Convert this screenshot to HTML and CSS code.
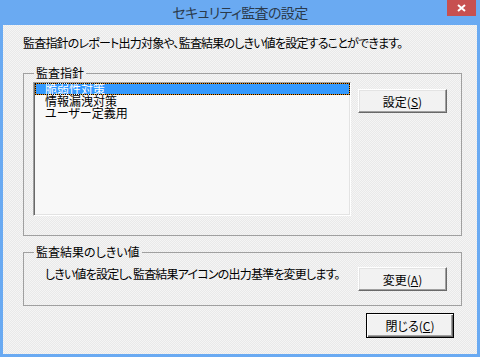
FILE: index.html
```html
<!DOCTYPE html>
<html lang="ja">
<head>
    <meta charset="UTF-8">
    <title>セキュリティ監査の設定</title>
    <link rel="stylesheet" href="styles.css">
</head>
<body>
    <div class="window">
        <div class="titlebar">
            <span class="title">セキュリティ監査の設定</span>
            <span class="close">
                <svg width="9" height="8" viewBox="0 0 9 8"><path d="M1 1 L8 7 M8 1 L1 7" stroke="#fff" stroke-width="2"/></svg>
            </span>
        </div>
        <div class="dialog">
            <p class="intro">監査指針のレポート出力対象や、監査結果のしきい値を設定することができます。</p>

            <fieldset class="group policy">
                <legend>監査指針</legend>
                <div class="policy-body">
                    <ul class="listbox">
                        <li class="selected">脆弱性対策</li>
                        <li>情報漏洩対策</li>
                        <li>ユーザー定義用</li>
                    </ul>
                    <button class="btn">設定(<u>S</u>)</button>
                </div>
            </fieldset>

            <fieldset class="group threshold">
                <legend>監査結果のしきい値</legend>
                <div class="threshold-body">
                    <p class="threshold-text">しきい値を設定し、監査結果アイコンの出力基準を変更します。</p>
                    <button class="btn">変更(<u>A</u>)</button>
                </div>
            </fieldset>

            <div class="footer">
                <button class="btn btn-default">閉じる(<u>C</u>)</button>
            </div>
        </div>
    </div>
</body>
</html>
```

FILE: styles.css
```css
* {
    box-sizing: border-box;
}

body {
    margin: 0;
    font-family: "Noto Sans CJK JP", "Liberation Sans", sans-serif;
    font-size: 12px;
    font-feature-settings: "palt";
    color: #000;
}

.window {
    width: 480px;
    height: 357px;
    background-color: #6aaaf2;
    display: flex;
    flex-direction: column;
}

.titlebar {
    height: 25px;
    display: grid;
    grid-template-columns: 1fr auto 1fr;
    align-items: start;
}

.title {
    grid-column: 2;
    font-size: 14px;
    line-height: 25px;
    letter-spacing: -0.6px;
    color: #2a3a4c;
}

.close {
    grid-column: 3;
    justify-self: end;
    width: 29px;
    height: 16px;
    margin-right: 4px;
    background-color: #c75050;
    display: flex;
    align-items: center;
    justify-content: center;
}

.dialog {
    flex: 1;
    margin: 0 3px 3px;
    padding: 11px 15px 0 20px;
    background-color: #efefef;
    background-image: repeating-conic-gradient(#e9e9e9 0 25%, #f5f5f5 0 50%);
    background-size: 2px 2px;
}

.intro {
    margin: 0 0 16px;
    line-height: 14px;
    letter-spacing: -0.8px;
    white-space: nowrap;
}

.group {
    width: 439px;
    margin: 0;
    min-width: 0;
    border: 1px solid #a0a0a0;
    padding: 0 14px 19px 9px;
}

.group legend {
    margin-left: 1px;
    padding: 0 2px;
    line-height: 14px;
}

.policy-body {
    display: flex;
    gap: 7px;
    align-items: flex-start;
    margin-top: 2px;
}

.listbox {
    width: 318px;
    height: 134px;
    margin: 0;
    padding: 0 0 0 1px;
    list-style: none;
    background-color: #f8f8f8;
    border: 1px solid;
    border-color: #a0a0a0 #fff #fff #a0a0a0;
    box-shadow: inset 1px 1px #696969, inset -1px -1px #e3e3e3;
}

.listbox li {
    height: 12px;
    line-height: 12px;
    padding-left: 10px;
    white-space: nowrap;
}

.listbox li.selected {
    background-color: #3399ff;
    color: #fff;
    box-shadow: inset 0 0 0 1px #e88a10;
    outline: 1px dotted #000;
    outline-offset: -1px;
}

.btn {
    width: 89px;
    height: 24px;
    padding: 0;
    font-family: inherit;
    font-size: 12px;
    font-feature-settings: "palt";
    color: #000;
    background-color: #f2f2f2;
    border: 1px solid;
    border-color: #fff #696969 #696969 #fff;
    box-shadow: inset -1px -1px #a0a0a0, inset 1px 1px #e3e3e3;
}

.policy-body .btn {
    margin-top: 7px;
}

.threshold {
    margin-top: 9px;
    padding-bottom: 14px;
}

.threshold-body {
    display: flex;
    align-items: flex-start;
    margin-top: 8px;
}

.threshold-text {
    flex: 1;
    margin: 0;
    padding-left: 12px;
    line-height: 14px;
    letter-spacing: -0.8px;
    white-space: nowrap;
}

.footer {
    width: 439px;
    margin-top: 7px;
    padding-right: 8px;
    display: flex;
    justify-content: flex-end;
}

.btn-default {
    width: 88px;
    height: 25px;
    border: 1px solid #000;
    box-shadow: inset 1px 1px #fff, inset -1px -1px #696969, inset -2px -2px #a0a0a0;
}
```
